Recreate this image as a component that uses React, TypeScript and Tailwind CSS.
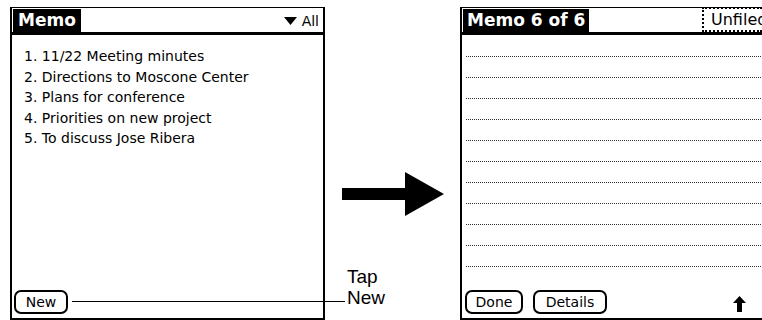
import React from 'react';

const palm = { fontFamily: '"DejaVu Sans", "Liberation Sans", sans-serif' };

const memos = [
  '11/22 Meeting minutes',
  'Directions to Moscone Center',
  'Plans for conference',
  'Priorities on new project',
  'To discuss Jose Ribera',
];

const PalmButton = ({ label, w }: { label: string; w: string }) => (
  <div
    className={`${w} h-[24px] border-2 border-black rounded-[7px] flex items-center justify-center text-[14px] leading-none text-black`}
  >
    {label}
  </div>
);

const DottedLine = () => (
  <div className="h-px w-full bg-[repeating-linear-gradient(to_right,#333_0,#333_1px,transparent_1px,transparent_2px)]" />
);

const MemoList = () => (
  <div className="ml-[10px] mt-[7px] w-[315px] h-[313px] border-x-2 border-t border-b-2 border-black flex flex-col" style={palm}>
    <div className="flex items-end justify-between border-b-[3px] border-black h-[27px] pl-[1px] pr-[4px] pt-[2px]">
      <div className="bg-black text-white font-bold text-[17px] h-[23px] px-[5px] flex items-center">Memo</div>
      <div className="flex items-center gap-[5px] text-[14px] h-[22px]">
        <svg width="13" height="8" viewBox="0 0 13 8">
          <path d="M0 0 L13 0 L6.5 8 Z" fill="black" />
        </svg>
        <span>All</span>
      </div>
    </div>
    <ol className="pl-[12px] pt-[11px] text-[14px] leading-[20.5px] text-black">
      {memos.map((m, i) => (
        <li key={m}>
          {i + 1}. {m}
        </li>
      ))}
    </ol>
    <div className="mt-auto mb-[4px] ml-[2px] flex">
      <PalmButton label="New" w="w-[54px]" />
    </div>
  </div>
);

const MemoEdit = () => (
  <div className="mt-[7px] flex-1 h-[313px] border-l-2 border-t border-b-2 border-black flex flex-col overflow-hidden" style={palm}>
    <div className="flex items-end border-b-[3px] border-black h-[27px] pl-[1px] pt-[2px]">
      <div className="bg-black text-white font-bold text-[17px] h-[23px] px-[4px] flex items-center shrink-0 whitespace-nowrap">
        Memo 6 of 6
      </div>
      <div className="flex-1" />
      {/* category picker runs off the right edge, as in the screenshot */}
      <div className="h-[25px] border-2 border-dotted border-black border-r-0 pl-[7px] flex items-center text-[16px] w-[60px] shrink-0 whitespace-nowrap overflow-hidden">
        Unfiled
      </div>
    </div>
    <div className="pt-[21px] pl-[4px] flex flex-col gap-[20px]">
      {Array.from({ length: 11 }).map((_, i) => (
        <DottedLine key={i} />
      ))}
    </div>
    <div className="mt-auto mb-[4px] ml-[3px] flex items-center gap-[10px]">
      <PalmButton label="Done" w="w-[58px]" />
      <PalmButton label="Details" w="w-[74px]" />
      <svg width="13" height="16" viewBox="0 0 13 16" className="ml-[116px] mt-[4px]">
        <path d="M6.5 0 L13 7 L9 7 L9 16 L4 16 L4 7 L0 7 Z" fill="black" />
      </svg>
    </div>
  </div>
);

export default function App() {
  return (
    <div className="w-[762px] h-[320px] bg-white relative overflow-hidden flex">
      <MemoList />
      <div className="w-[135px] flex flex-col shrink-0" style={{ fontFamily: '"Liberation Sans", Arial, sans-serif' }}>
        <svg width="104" height="44" viewBox="0 0 104 44" className="ml-[17px] mt-[172px]">
          <path d="M0 16 L63 16 L63 0 L102 22 L63 44 L63 28 L0 28 Z" fill="black" />
        </svg>
        <div className="ml-[22px] mt-[50px] text-[19px] leading-[21px] text-black">
          Tap
          <br />
          New
        </div>
      </div>
      <MemoEdit />
      <div className="absolute left-[72px] top-[301px] w-[273px] h-px bg-black" />
    </div>
  );
}
